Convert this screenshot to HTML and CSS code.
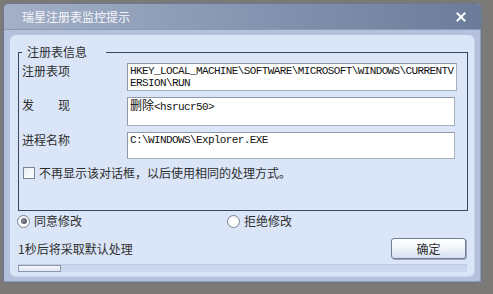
FILE: index.html
```html
<!DOCTYPE html>
<html>
<head>
<meta charset="utf-8">
<link rel="stylesheet" href="styles.css">
</head>
<body>
<div class="window">
  <div class="titlebar">
    <span class="title">瑞星注册表监控提示</span>
    <svg class="close" width="10" height="10" viewBox="0 0 10 10"><path d="M1.5 1.5 L8.5 8.5 M8.5 1.5 L1.5 8.5" stroke="#ffffff" stroke-width="2" stroke-linecap="square"/></svg>
  </div>
  <div class="panel">
    <div class="group">
      <div class="group-head">
        <div class="corner-l"></div>
        <div class="legend">注册表信息</div>
        <div class="corner-r"></div>
      </div>
      <div class="group-body">
        <div class="grid">
          <div class="label">注册表项</div>
          <div class="edit edit-1">HKEY_LOCAL_MACHINE\SOFTWARE\MICROSOFT\WINDOWS\CURRENTVERSION\RUN</div>
          <div class="label">发　　现</div>
          <div class="edit edit-2"><span class="cjk">删除</span>&lt;hsrucr50&gt;</div>
          <div class="label">进程名称</div>
          <div class="edit edit-3">C:\WINDOWS\Explorer.EXE</div>
        </div>
        <div class="check-row">
          <span class="checkbox"></span>
          <span class="text">不再显示该对话框，以后使用相同的处理方式。</span>
        </div>
      </div>
    </div>
    <div class="radio-row">
      <div class="radio-item first"><span class="radio checked"></span><span class="text">同意修改</span></div>
      <div class="radio-item"><span class="radio"></span><span class="text">拒绝修改</span></div>
    </div>
    <div class="status-row">
      <span class="text">1秒后将采取默认处理</span>
      <div class="button">确定</div>
    </div>
    <div class="progress"><div class="progress-fill"></div></div>
  </div>
</div>
</body>
</html>
```

FILE: styles.css
```css
* { box-sizing: border-box; }
html, body { margin: 0; padding: 0; }
body {
  width: 493px;
  height: 294px;
  background: #7b7a79;
  font-family: "Noto Sans CJK SC", "Liberation Sans", sans-serif;
  font-size: 12px;
  color: #2e2e2e;
  overflow: hidden;
}
.window {
  margin: 3px 0 0 3px;
  width: 479px;
  height: 280px;
  background: #b3c1dc;
  border: 1px solid #6c778c;
  border-radius: 6px 6px 3px 3px;
  display: flex;
  flex-direction: column;
  box-shadow: inset -1px -1px 0 #8e9bb5;
}
.titlebar {
  height: 26px;
  flex: none;
  display: flex;
  align-items: center;
  justify-content: space-between;
  padding: 0 15px 0 18px;
  background: linear-gradient(to right, #a3b0c7 0%, #8695b1 50%, #6b7c9a 100%);
  border-radius: 5px 5px 0 0;
  border-bottom: 1px solid #8a99b6;
}
.title {
  color: #f6f8fb;
  font-size: 12px;
  line-height: 14px;
}
.close { display: block; }
.panel {
  margin: 5px 6px 6px 6px;
  flex: 1;
  background: #dae6f8;
  border-radius: 6px;
  border-right: 1px solid #c6d3ea;
  border-bottom: 1px solid #c6d3ea;
  padding: 10px 6px 4px 8px;
  display: flex;
  flex-direction: column;
}
.group { display: flex; flex-direction: column; }
.group-head {
  height: 14px;
  display: flex;
  align-items: center;
}
.corner-l {
  align-self: flex-end;
  width: 4px;
  height: 7px;
  border-top: 1px solid #39465f;
  border-left: 1px solid #39465f;
}
.legend {
  padding: 0 19px 0 5px;
  line-height: 14px;
  font-size: 12px;
  color: #2e2e2e;
}
.corner-r {
  align-self: flex-end;
  flex: 1;
  height: 7px;
  border-top: 1px solid #39465f;
  border-right: 1px solid #39465f;
}
.group-body {
  border: 1px solid #39465f;
  border-top: none;
  padding: 4px 0 31px 3px;
}
.grid {
  display: grid;
  grid-template-columns: 105px auto;
  row-gap: 6px;
  align-items: start;
}
.label {
  font-size: 12px;
  line-height: 16px;
  color: #2e2e2e;
}
.edit {
  background: #ffffff;
  border: 1px solid #a7afbb;
  border-top-color: #8f98a6;
  border-left-color: #8f98a6;
  padding: 1px 0 1px 2px;
  font-family: "Liberation Mono", "DejaVu Sans Mono", monospace;
  font-size: 11px;
  letter-spacing: -0.61px;
  line-height: 12px;
  color: #111;
  word-break: break-all;
}
.cjk {
  font-family: "Noto Sans CJK SC", sans-serif;
  font-size: 12px;
  letter-spacing: 0;
}
.edit-1 { width: 330px; height: 28px; }
.edit-2 { width: 328px; height: 29px; }
.edit-3 { width: 328px; height: 27px; }
.check-row {
  margin-top: 8px;
  height: 12px;
  display: flex;
  align-items: center;
  padding-left: 1px;
}
.checkbox {
  width: 12px;
  height: 12px;
  border: 1px solid #7c8596;
  background: linear-gradient(135deg, #e8ecf2, #ffffff);
  margin-right: 4px;
}
.text {
  font-size: 12px;
  line-height: 14px;
  color: #2e2e2e;
}
.radio-row {
  margin-top: 3px;
  height: 14px;
  display: flex;
  align-items: center;
  margin-left: -1px;
}
.radio-item { display: flex; align-items: center; }
.radio-item.first { width: 210px; }
.radio {
  width: 13px;
  height: 13px;
  border-radius: 50%;
  border: 1px solid #7d8595;
  background: radial-gradient(circle at 60% 60%, #ffffff 40%, #e2e6ee 100%);
  margin-right: 4px;
  display: flex;
  align-items: center;
  justify-content: center;
}
.radio.checked::after {
  content: "";
  width: 6px;
  height: 6px;
  border-radius: 50%;
  background: radial-gradient(circle at 40% 40%, #8d929c, #3f4450);
}
.status-row {
  margin-top: 10px;
  height: 21px;
  display: flex;
  align-items: center;
  justify-content: space-between;
  padding-right: 2px;
}
.button {
  width: 75px;
  height: 21px;
  border: 1px solid #6e7c96;
  border-radius: 3px;
  background: linear-gradient(to bottom, #ffffff 0%, #f2f5fb 45%, #d6dfef 100%);
  box-shadow: 1px 1px 0 #9aa6bd;
  display: flex;
  align-items: center;
  justify-content: center;
  font-size: 12px;
  color: #2e2e2e;
}
.progress {
  margin-top: 5px;
  height: 8px;
  background: #cad7ee;
  border-top: 1px solid #bccae3;
  margin-right: 1px;
  margin-left: 0;
}
.progress-fill {
  width: 43px;
  height: 7px;
  border: 1px solid #8d97a8;
  background: linear-gradient(to bottom, #f4f7fc, #dfe7f5);
}
```
